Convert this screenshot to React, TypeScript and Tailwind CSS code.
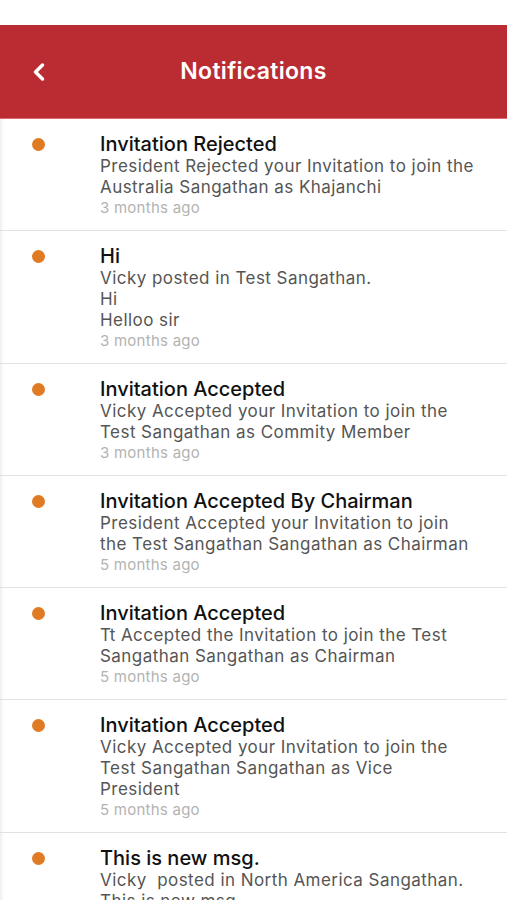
import { ChevronLeft } from 'lucide-react';

interface Notice {
    title: string;
    lines: string[];
    time: string;
}

const notices: Notice[] = [
    {
        title: 'Invitation Rejected',
        lines: ['President Rejected your Invitation to join the', 'Australia Sangathan as Khajanchi'],
        time: '3 months ago',
    },
    {
        title: 'Hi',
        lines: ['Vicky posted in Test Sangathan.', 'Hi', 'Helloo sir'],
        time: '3 months ago',
    },
    {
        title: 'Invitation Accepted',
        lines: ['Vicky Accepted your Invitation to join the', 'Test Sangathan as Commity Member'],
        time: '3 months ago',
    },
    {
        title: 'Invitation Accepted By Chairman',
        lines: ['President Accepted your Invitation to join', 'the Test Sangathan Sangathan as Chairman'],
        time: '5 months ago',
    },
    {
        title: 'Invitation Accepted',
        lines: ['Tt Accepted the Invitation to join the Test', 'Sangathan Sangathan as Chairman'],
        time: '5 months ago',
    },
    {
        title: 'Invitation Accepted',
        lines: ['Vicky Accepted your Invitation to join the', 'Test Sangathan Sangathan as Vice', 'President'],
        time: '5 months ago',
    },
    {
        title: 'This is new msg.',
        lines: ['Vicky\u00a0 posted in North America Sangathan.', 'This is new msg.'],
        time: '5 months ago',
    },
];

const NoticeRow = ({ notice }: { notice: Notice }) => (
    <div className="flex border-b border-[#e2e2e2] pt-[13px] pb-[12px]">
        <div className="w-[100px] shrink-0 flex pl-[32px] pt-[6px]">
            <span className="w-[13px] h-[13px] rounded-full bg-[#e07b24]" />
        </div>
        <div className="flex flex-col">
            <p className="text-[20px] leading-[24px] font-medium text-[#111]">{notice.title}</p>
            {notice.lines.map((line, i) => (
                <p key={i} className="text-[17px] leading-[21px] tracking-[0.45px] text-[#555] whitespace-nowrap">{line}</p>
            ))}
            <p className="text-[15px] leading-[20px] tracking-[0.25px] text-[#b3b3b3]">{notice.time}</p>
        </div>
    </div>
);

export default function App() {
    return (
        <div className="w-[507px] h-[900px] overflow-hidden bg-white font-['Inter',sans-serif]">
            <div className="h-[25px] bg-white" />
            {/* Header */}
            <div className="h-[94px] bg-[#bb2c32] border-b border-[#e06a6e] flex items-center relative">
                <button className="absolute left-[25px] text-white" aria-label="Back">
                    <ChevronLeft size={28} strokeWidth={3} />
                </button>
                <h1 className="w-full text-center text-white text-[23px] tracking-[0.3px] font-semibold">Notifications</h1>
            </div>

            {/* List */}
            <div className="shadow-[inset_4px_0_4px_-3px_rgba(0,0,0,0.1)]">
                {notices.map((n, i) => (
                    <NoticeRow key={i} notice={n} />
                ))}
            </div>
        </div>
    );
}
